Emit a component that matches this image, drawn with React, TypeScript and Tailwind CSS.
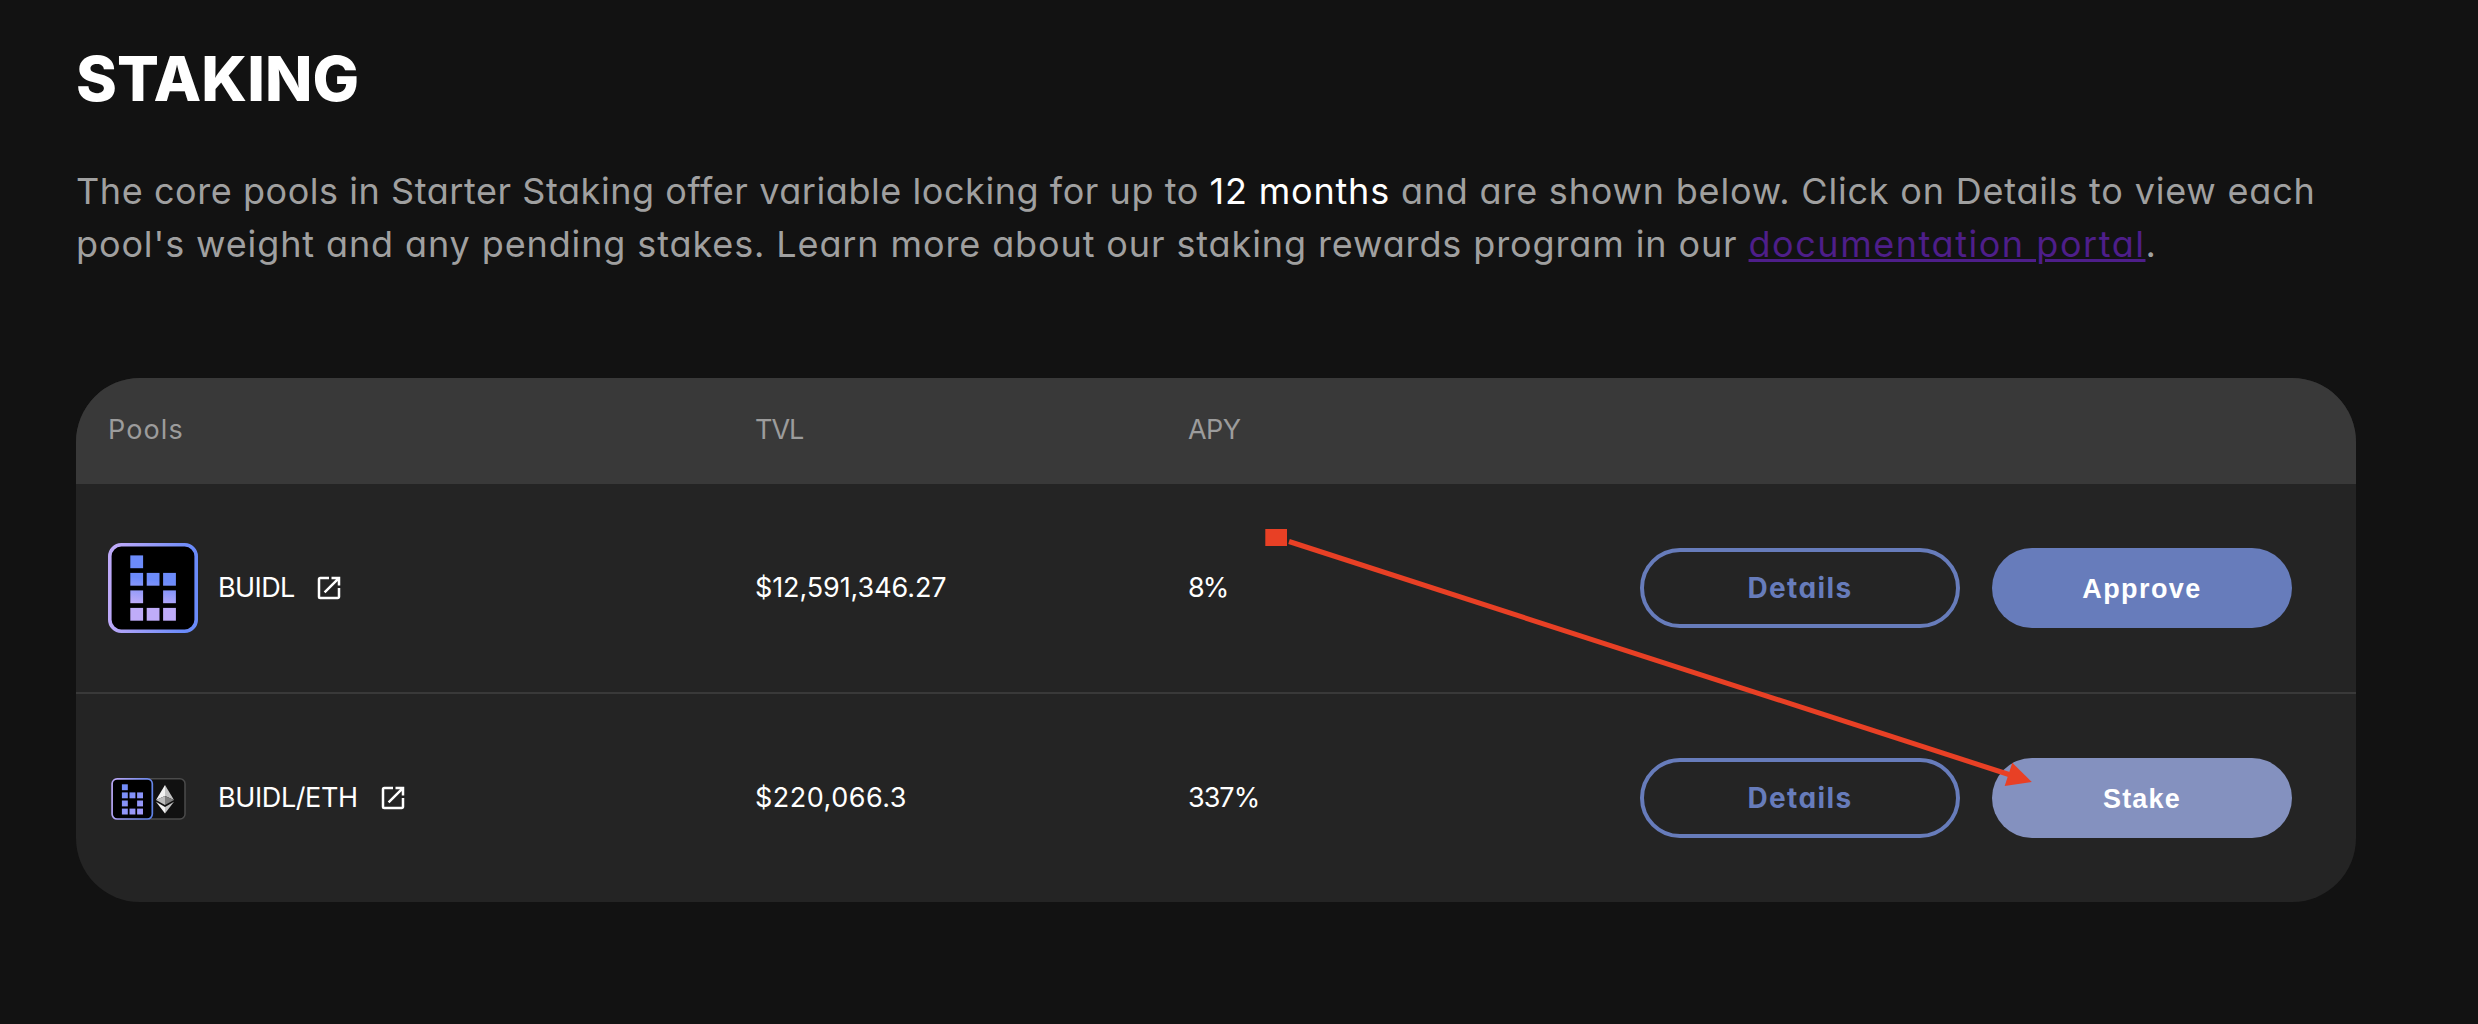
import { MdOpenInNew } from "react-icons/md";

const SQUARES = [
  [0, 0],
  [0, 1],
  [1, 1],
  [2, 1],
  [0, 2],
  [2, 2],
  [0, 3],
  [1, 3],
  [2, 3],
];

function BuidlLogo() {
  return (
    <svg className="h-[90px] w-[90px] shrink-0" viewBox="0 0 90 90" fill="none">
      <defs>
        <linearGradient id="buidl-edge" x1="0" y1="40" x2="90" y2="50" gradientUnits="userSpaceOnUse">
          <stop offset="0.05" stopColor="#bda9f8" />
          <stop offset="0.9" stopColor="#6a8bfa" />
        </linearGradient>
        <linearGradient id="buidl-fill" x1="40" y1="36" x2="36" y2="62" gradientUnits="userSpaceOnUse">
          <stop offset="0" stopColor="#6c8bfa" />
          <stop offset="1" stopColor="#bfacf9" />
        </linearGradient>
      </defs>
      <rect x="1.8" y="1.8" width="86.4" height="86.4" rx="11.5" fill="#000" stroke="url(#buidl-edge)" strokeWidth="3.6" />
      {SQUARES.map(([c, r]) => (
        <rect key={`${c}-${r}`} x={22.3 + c * 16.4} y={12.4 + r * 17.5} width="12.8" height="12.8" fill="url(#buidl-fill)" />
      ))}
    </svg>
  );
}

function BuidlEthLogo() {
  return (
    <svg className="h-[90px] w-[90px] shrink-0" viewBox="0 0 90 90" fill="none">
      <defs>
        <linearGradient id="pair-edge" x1="4" y1="42" x2="45" y2="48" gradientUnits="userSpaceOnUse">
          <stop offset="0" stopColor="#b9a7f5" />
          <stop offset="1" stopColor="#5f82e6" />
        </linearGradient>
        <linearGradient id="pair-fill" x1="14" y1="30" x2="35" y2="62" gradientUnits="userSpaceOnUse">
          <stop offset="0" stopColor="#6c8bfa" />
          <stop offset="1" stopColor="#a49bf8" />
        </linearGradient>
      </defs>
      <rect x="36.8" y="25.8" width="40.2" height="40.2" rx="5" fill="#111" stroke="#4b4b4b" strokeWidth="1.5" />
      <rect x="4.1" y="25.8" width="40.2" height="40.2" rx="5" fill="#000" stroke="url(#pair-edge)" strokeWidth="1.7" />
      {SQUARES.map(([c, r]) => (
        <rect key={`${c}-${r}`} x={13.9 + c * 7.6} y={31.3 + r * 8.1} width="5.9" height="5.9" fill="url(#pair-fill)" />
      ))}
      <path d="M57 32L48 47L57 43Z" fill="#f2f2f2" />
      <path d="M57 32L66 47L57 43Z" fill="#c4c4c4" />
      <path d="M48 47L57 43V52Z" fill="#bcbcbc" />
      <path d="M66 47L57 43V52Z" fill="#7f7f7f" />
      <path d="M48 48.7L57 54V60.5Z" fill="#f2f2f2" />
      <path d="M66 48.7L57 54V60.5Z" fill="#c4c4c4" />
    </svg>
  );
}

type RowProps = {
  logo: React.ReactNode;
  name: string;
  nameClass: string;
  tvl: string;
  tvlClass: string;
  apy: string;
  apyClass: string;
  action: string;
  actionClass: string;
};

function PoolRow({ logo, name, nameClass, tvl, tvlClass, apy, apyClass, action, actionClass }: RowProps) {
  return (
    <div className="grid h-[208px] grid-cols-[647px_433px_1fr] items-center pr-16 pl-8 text-[27px] text-white">
      <div className="flex items-center">
        {logo}
        <span className={`ml-5 ${nameClass}`}>{name}</span>
        <MdOpenInNew className="size-[30px]" />
      </div>
      <div className={tvlClass}>{tvl}</div>
      <div className="flex items-center justify-between">
        <span className={apyClass}>{apy}</span>
        <div className="flex gap-8">
          <button className="h-20 w-80 rounded-full border-4 border-[#677cbb] text-[28px] font-bold tracking-[1.4px] text-[#677cbb]">
            Details
          </button>
          <button
            className={`h-20 w-[300px] rounded-full pt-0.5 font-['Liberation_Sans',sans-serif] font-bold ${actionClass}`}
          >
            {action}
          </button>
        </div>
      </div>
    </div>
  );
}

function PointerArrow() {
  return (
    <svg
      className="pointer-events-none absolute top-[520px] left-[1260px] h-[280px] w-[780px]"
      viewBox="1260 520 780 280"
      fill="#e84025"
    >
      <rect x="1265.3" y="529" width="21.7" height="17" />
      <path d="M1289 541.5L2009 774.5" stroke="#e84025" strokeWidth="5" />
      <path d="M2012.3 762.7L2031.8 782L2004.7 786Z" />
    </svg>
  );
}

export default function App() {
  return (
    <div className="relative h-[1024px] w-full overflow-hidden bg-[#121212] pt-[31px] pl-[76px] font-[Inter,sans-serif] [font-feature-settings:'cv11']">
      <h1 className="text-[62px] leading-[96px] font-extrabold tracking-[0.1px] text-white">STAKING</h1>

      <p className="mt-[38px] text-[36px] leading-[52.5px] whitespace-pre text-[#a0a0a0]">
        <span className="block">
          <span className="tracking-[0.56px]">
            {"The core pools in Starter Staking offer variable locking for up to "}
          </span>
          <span className="tracking-[0.8px] text-white">12 months</span>
          <span className="tracking-[0.8px]">{" and are shown below. Click on Details to view each"}</span>
        </span>
        <span className="block">
          <span className="tracking-[0.885px]">
            {"pool's weight and any pending stakes. Learn more about our staking rewards program in our "}
          </span>
          <a
            href="#"
            className="tracking-[1.54px] text-[#4e1e8a] underline decoration-[3px] underline-offset-[2px]"
          >
            documentation portal
          </a>
          .
        </span>
      </p>

      <div className="mt-[108px] w-[2280px] overflow-hidden rounded-[64px] bg-[#242424]">
        <div className="grid h-[106px] grid-cols-[647px_433px_1fr] items-center bg-[#393939] pr-16 pb-0.5 pl-8 text-[27px] text-[#9c9c9c]">
          <span className="tracking-[1.1px]">Pools</span>
          <span className="tracking-[-1px]">TVL</span>
          <span className="tracking-[-0.6px]">APY</span>
        </div>
        <PoolRow
          logo={<BuidlLogo />}
          name="BUIDL"
          nameClass="w-24 tracking-[-0.6px]"
          tvl="$12,591,346.27"
          tvlClass="tracking-[-0.1px]"
          apy="8%"
          apyClass="tracking-[-2px]"
          action="Approve"
          actionClass="bg-[#677cbb] tracking-[1.4px]"
        />
        <div className="h-0.5 bg-[#393939]" />
        <PoolRow
          logo={<BuidlEthLogo />}
          name="BUIDL/ETH"
          nameClass="w-40 tracking-[-0.4px]"
          tvl="$220,066.3"
          tvlClass="tracking-[0.5px]"
          apy="337%"
          apyClass="tracking-[-1px]"
          action="Stake"
          actionClass="bg-[#8491bf] tracking-[1.2px]"
        />
      </div>

      <PointerArrow />
    </div>
  );
}
